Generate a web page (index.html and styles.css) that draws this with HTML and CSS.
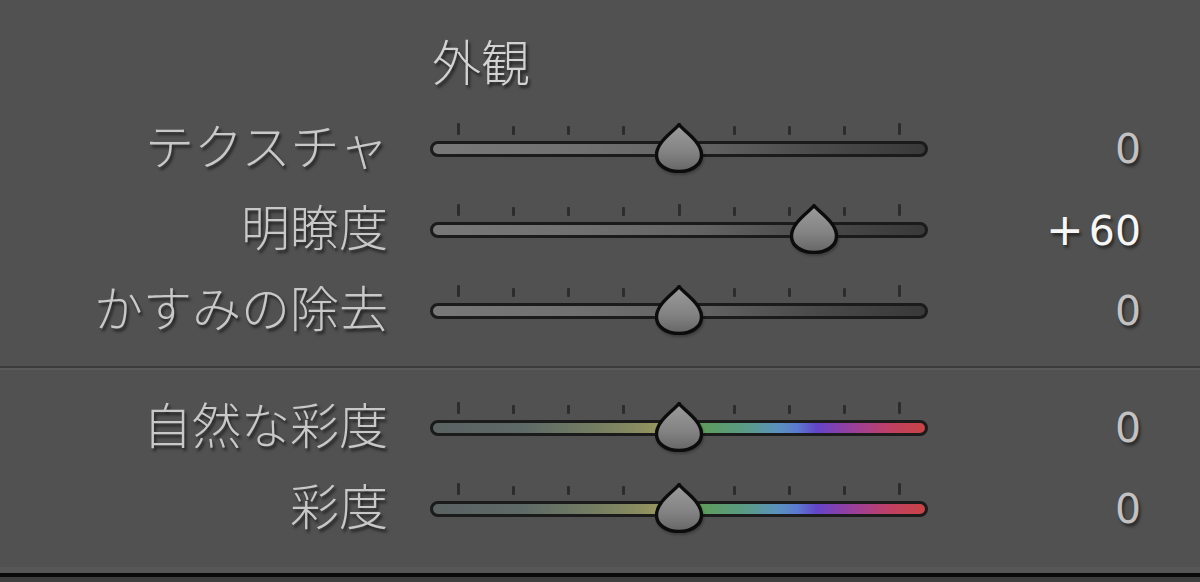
FILE: index.html
```html
<!DOCTYPE html>
<html lang="ja">
<head>
<meta charset="utf-8">
<title>外観</title>
<link rel="stylesheet" href="styles.css">
</head>
<body>
<div class="panel">
  <div class="row head-row">
    <div></div>
    <div class="header">外観</div>
    <div></div>
  </div>

  <div class="row">
    <div class="label">テクスチャ</div>
    <div class="slider">
      <div class="ticks"><i class="tick major"></i><i class="tick"></i><i class="tick"></i><i class="tick"></i><i class="tick major"></i><i class="tick"></i><i class="tick"></i><i class="tick"></i><i class="tick major"></i></div>
      <div class="track gray">
        <svg class="thumb" style="left:50%" viewBox="0 0 48 50" width="48" height="50"><defs><linearGradient id="tg1" x1="0" y1="0" x2="0" y2="1"><stop offset="0" stop-color="#9c9c9c"/><stop offset="0.6" stop-color="#828282"/><stop offset="1" stop-color="#666"/></linearGradient></defs><path d="M24 1.5 C27 6.5 46.5 18 46.5 32 C46.5 42 36.5 48.5 24 48.5 C11.5 48.5 1.5 42 1.5 32 C1.5 18 21 6.5 24 1.5 Z" fill="url(#tg1)" stroke="#0c0c0c" stroke-width="3.4" stroke-linejoin="round"/></svg>
      </div>
    </div>
    <div class="value">0</div>
  </div>

  <div class="row">
    <div class="label">明瞭度</div>
    <div class="slider">
      <div class="ticks"><i class="tick major"></i><i class="tick"></i><i class="tick"></i><i class="tick"></i><i class="tick major"></i><i class="tick"></i><i class="tick"></i><i class="tick"></i><i class="tick major"></i></div>
      <div class="track gray">
        <svg class="thumb" style="left:77.4%" viewBox="0 0 48 50" width="48" height="50"><defs><linearGradient id="tg2" x1="0" y1="0" x2="0" y2="1"><stop offset="0" stop-color="#9c9c9c"/><stop offset="0.6" stop-color="#828282"/><stop offset="1" stop-color="#666"/></linearGradient></defs><path d="M24 1.5 C27 6.5 46.5 18 46.5 32 C46.5 42 36.5 48.5 24 48.5 C11.5 48.5 1.5 42 1.5 32 C1.5 18 21 6.5 24 1.5 Z" fill="url(#tg2)" stroke="#0c0c0c" stroke-width="3.4" stroke-linejoin="round"/></svg>
      </div>
    </div>
    <div class="value active"><span class="sign">+</span>60</div>
  </div>

  <div class="row">
    <div class="label">かすみの除去</div>
    <div class="slider">
      <div class="ticks"><i class="tick major"></i><i class="tick"></i><i class="tick"></i><i class="tick"></i><i class="tick major"></i><i class="tick"></i><i class="tick"></i><i class="tick"></i><i class="tick major"></i></div>
      <div class="track gray">
        <svg class="thumb" style="left:50%" viewBox="0 0 48 50" width="48" height="50"><defs><linearGradient id="tg3" x1="0" y1="0" x2="0" y2="1"><stop offset="0" stop-color="#9c9c9c"/><stop offset="0.6" stop-color="#828282"/><stop offset="1" stop-color="#666"/></linearGradient></defs><path d="M24 1.5 C27 6.5 46.5 18 46.5 32 C46.5 42 36.5 48.5 24 48.5 C11.5 48.5 1.5 42 1.5 32 C1.5 18 21 6.5 24 1.5 Z" fill="url(#tg3)" stroke="#0c0c0c" stroke-width="3.4" stroke-linejoin="round"/></svg>
      </div>
    </div>
    <div class="value">0</div>
  </div>

  <div class="sep"></div>

  <div class="row">
    <div class="label">自然な彩度</div>
    <div class="slider">
      <div class="ticks"><i class="tick major"></i><i class="tick"></i><i class="tick"></i><i class="tick"></i><i class="tick major"></i><i class="tick"></i><i class="tick"></i><i class="tick"></i><i class="tick major"></i></div>
      <div class="track color">
        <svg class="thumb" style="left:50%" viewBox="0 0 48 50" width="48" height="50"><defs><linearGradient id="tg4" x1="0" y1="0" x2="0" y2="1"><stop offset="0" stop-color="#9c9c9c"/><stop offset="0.6" stop-color="#828282"/><stop offset="1" stop-color="#666"/></linearGradient></defs><path d="M24 1.5 C27 6.5 46.5 18 46.5 32 C46.5 42 36.5 48.5 24 48.5 C11.5 48.5 1.5 42 1.5 32 C1.5 18 21 6.5 24 1.5 Z" fill="url(#tg4)" stroke="#0c0c0c" stroke-width="3.4" stroke-linejoin="round"/></svg>
      </div>
    </div>
    <div class="value">0</div>
  </div>

  <div class="row">
    <div class="label">彩度</div>
    <div class="slider">
      <div class="ticks"><i class="tick major"></i><i class="tick"></i><i class="tick"></i><i class="tick"></i><i class="tick major"></i><i class="tick"></i><i class="tick"></i><i class="tick"></i><i class="tick major"></i></div>
      <div class="track color">
        <svg class="thumb" style="left:50%" viewBox="0 0 48 50" width="48" height="50"><defs><linearGradient id="tg5" x1="0" y1="0" x2="0" y2="1"><stop offset="0" stop-color="#9c9c9c"/><stop offset="0.6" stop-color="#828282"/><stop offset="1" stop-color="#666"/></linearGradient></defs><path d="M24 1.5 C27 6.5 46.5 18 46.5 32 C46.5 42 36.5 48.5 24 48.5 C11.5 48.5 1.5 42 1.5 32 C1.5 18 21 6.5 24 1.5 Z" fill="url(#tg5)" stroke="#0c0c0c" stroke-width="3.4" stroke-linejoin="round"/></svg>
      </div>
    </div>
    <div class="value">0</div>
  </div>
</div>
<div class="edge-light"></div>
<div class="edge-black"></div>
<div class="edge-below"></div>
</body>
</html>
```

FILE: styles.css
```css
html, body {
  margin: 0;
  padding: 0;
}
body {
  width: 1200px;
  height: 582px;
  overflow: hidden;
  background: #515151;
  display: flex;
  flex-direction: column;
  font-family: "Noto Sans CJK JP", "Noto Sans", sans-serif;
}
.panel {
  flex: 1;
  padding-top: 36px;
}
.row {
  display: grid;
  grid-template-columns: 388px 498px 171px;
  column-gap: 42px;
  height: 81px;
  align-items: center;
}
.head-row {
  height: 48px;
  margin-bottom: 24.5px;
}
.header {
  font-size: 49px;
  line-height: 48px;
  font-weight: 300;
  padding-left: 2px;
  color: #d2d2d2;
  text-shadow: 2px 3px 3px rgba(0, 0, 0, 0.6);
  white-space: nowrap;
}
.label {
  font-size: 49px;
  line-height: 48px;
  font-weight: 300;
  padding-bottom: 10px;
  text-align: right;
  color: #c8c8c8;
  text-shadow: 2px 3px 3px rgba(0, 0, 0, 0.6);
  white-space: nowrap;
}
.slider {
  display: flex;
  flex-direction: column;
  padding-bottom: 18px;
}
.ticks {
  height: 12px;
  margin-bottom: 6px;
  padding: 0 27px;
  display: flex;
  justify-content: space-between;
  align-items: flex-end;
}
.tick {
  display: block;
  width: 3px;
  height: 9px;
  background: #2c2c2c;
  border-radius: 1px;
}
.tick.major {
  height: 12px;
}
.track {
  position: relative;
  box-sizing: border-box;
  height: 16px;
  border: 3px solid #1b1b1b;
  border-radius: 8px;
}
.track.gray {
  background: linear-gradient(to right, #787878 0%, #707070 30%, #626262 55%, #4a4a4a 78%, #393939 100%);
}
.track.color {
  background: linear-gradient(to right,
    #5a6262 0%, #5d6967 18%, #737c62 32%, #8a8c60 42%, #9a9a5e 47%,
    #7d9a5c 51%, #5e9c5e 55%, #5a9a88 64%, #5a92bc 70%, #5b7ad0 74%,
    #6345c8 78%, #8a40a8 83%, #a84088 88%, #c04062 93%, #c84444 100%);
}
.thumb {
  position: absolute;
  top: -21px;
  transform: translateX(-50%);
  display: block;
  filter: drop-shadow(1px 2px 1px rgba(0, 0, 0, 0.25));
}
.value {
  font-family: "DejaVu Sans", sans-serif;
  font-size: 41px;
  line-height: 41px;
  text-align: right;
  color: #c2c2c2;
  text-shadow: 2px 3px 3px rgba(0, 0, 0, 0.5);
  white-space: nowrap;
}
.value.active {
  color: #f6f6f6;
}
.sign {
  font-size: 45px;
  margin-right: 5px;
}
.sep {
  margin-top: 14.5px;
  margin-bottom: 17.5px;
  height: 2px;
  background: #3b3b3b;
  border-bottom: 2px solid #5a5a5a;
}
.edge-light {
  height: 6px;
  background: #575757;
}
.edge-black {
  height: 4px;
  background: #0a0a0a;
}
.edge-below {
  height: 5px;
  background: #3e3e3e;
}
```
